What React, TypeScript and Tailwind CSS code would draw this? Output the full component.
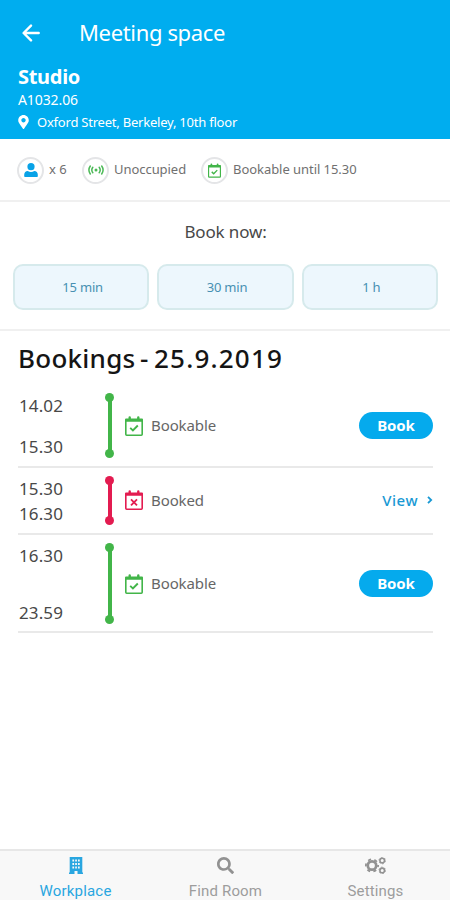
import type { ReactNode } from "react";
import { FaMapMarkerAlt, FaSearch } from "react-icons/fa";

function CalendarIcon({ mark, className }: { mark: "check" | "cross"; className: string }) {
  return (
    <svg viewBox="0 0 18 20" className={className} fill="none" stroke="currentColor">
      <path d="M0 3.5a1 1 0 0 1 1-1h2.5V1.4a1.2 1.2 0 0 1 2.4 0v1.1h6.2V1.4a1.2 1.2 0 0 1 2.4 0v1.1H17a1 1 0 0 1 1 1v2.3H0z" fill="currentColor" stroke="none" />
      <path d="M.8 5v13.3c0 .5.4.9.9.9h14.6c.5 0 .9-.4.9-.9V5" strokeWidth="1.6" />
      {mark === "check" ? (
        <path d="m5.2 11.9 2.7 2.5 4.9-4.9" strokeWidth="1.9" />
      ) : (
        <path d="m6 9.4 6 6m0-6-6 6" strokeWidth="1.8" />
      )}
    </svg>
  );
}

function PersonIcon() {
  return (
    <svg viewBox="0 0 14 14" className="size-[14px] text-[#08a2e7]" fill="currentColor">
      <circle cx="7" cy="3.7" r="3.6" />
      <path d="M1 14a.8.8 0 0 1-.8-.8v-1.5c0-2.2 1.5-3.4 3.5-3.6 1.9 1.3 4.7 1.3 6.6 0 2 .2 3.5 1.4 3.5 3.6v1.5a.8.8 0 0 1-.8.8z" />
    </svg>
  );
}

function SignalIcon() {
  return (
    <svg viewBox="0 0 16 12" className="h-3 w-4 text-[#4bb956]" fill="none" stroke="currentColor" strokeWidth="1.5" strokeLinecap="round">
      <circle cx="8" cy="6" r="1.5" fill="currentColor" stroke="none" />
      <path d="M4.8 3.3a4.5 4.5 0 0 0 0 5.4M11.2 3.3a4.5 4.5 0 0 1 0 5.4M2.3 2a7 7 0 0 0 0 8M13.7 2a7 7 0 0 1 0 8" />
    </svg>
  );
}

function BuildingIcon() {
  return (
    <svg viewBox="0 0 14 17" className="h-[17px] w-[14px]">
      <path d="M.7 0h12.6v15.5h.7V17H8.5v-3h-3v3H0v-1.5h.7z" fill="currentColor" />
      <path d="M3.4 2.5h1.7v2H3.4zm2.8 0h1.7v2H6.2zm2.8 0h1.7v2H9zM3.4 6h1.7v2H3.4zm2.8 0h1.7v2H6.2zM9 6h1.7v2H9zM3.4 9.5h1.7v2H3.4zm2.8 0h1.7v2H6.2zm2.8 0h1.7v2H9z" fill="#f8f8f8" />
    </svg>
  );
}

function GearsIcon() {
  return (
    <svg viewBox="0 0 21 17" className="h-[17px] w-[21px] text-[#929292]" fill="none" stroke="currentColor">
      <circle cx="7" cy="8.5" r="4.2" strokeWidth="2.7" />
      <circle cx="7" cy="8.5" r="6.1" strokeWidth="1.8" strokeDasharray="3 3.388" strokeDashoffset="1.5" />
      <circle cx="17.2" cy="3.6" r="2.3" strokeWidth="1.6" />
      <circle cx="17.2" cy="3.6" r="3.3" strokeWidth=".8" strokeDasharray="1.7 1.756" />
      <circle cx="17.2" cy="13.4" r="2.3" strokeWidth="1.6" />
      <circle cx="17.2" cy="13.4" r="3.3" strokeWidth=".8" strokeDasharray="1.7 1.756" />
    </svg>
  );
}

function Badge({ children }: { children: ReactNode }) {
  return (
    <span className="flex size-[27px] shrink-0 items-center justify-center rounded-full border-2 border-[#e4e5e7] bg-white">
      {children}
    </span>
  );
}

function Timeline({ className }: { className: string }) {
  return (
    <div className={`flex w-[9px] shrink-0 flex-col items-center ${className}`}>
      <span className="size-[9px] shrink-0 rounded-full bg-current" />
      <span className="-my-1 w-1 flex-1 bg-current" />
      <span className="size-[9px] shrink-0 rounded-full bg-current" />
    </div>
  );
}

type RowProps = { from: string; to: string; booked?: boolean; height: string; times: string; line: string; body: string };

function BookingRow({ from, to, booked, height, times, line, body }: RowProps) {
  return (
    <div className={`flex border-b-2 border-[#e9e9e9] ${height}`}>
      <div className={`flex w-[87px] flex-col justify-between pl-px text-[17px] leading-6 tracking-[0.1px] text-[#484848] ${times}`}>
        <span>{from}</span>
        <span>{to}</span>
      </div>
      <Timeline className={`${line} ${booked ? "text-[#e31b50]" : "text-[#42b549]"}`} />
      <div className={`flex flex-1 items-center pl-[11px] ${body}`}>
        <CalendarIcon mark={booked ? "cross" : "check"} className={`h-5 w-[18px] ${booked ? "text-[#e31b50]" : "text-[#42b549]"}`} />
        <span className="ml-[8px] text-[15px] tracking-[-0.1px] text-[#666]">{booked ? "Booked" : "Bookable"}</span>
        {booked ? (
          <button className="ml-auto flex items-center text-[15px] font-medium tracking-[0.5px] text-[#1999d4]">
            View
            <svg viewBox="0 0 6 8" className="ml-[9px] h-2 w-[6px]" fill="none" stroke="currentColor" strokeWidth="1.8">
              <path d="m1 .8 3.2 3.2L1 7.2" />
            </svg>
          </button>
        ) : (
          <button className="ml-auto h-[27px] w-[74px] rounded-full bg-[#05aaed] text-[15px] leading-[27px] font-bold tracking-[-0.1px] text-white">
            Book
          </button>
        )}
      </div>
    </div>
  );
}

export default function App() {
  return (
    <div className="flex h-[900px] w-[450px] flex-col overflow-hidden bg-white font-['Noto_Sans',sans-serif]">
      <header className="h-[139px] shrink-0 bg-[#00adef] pt-[18px] pl-[18px] text-white">
        <div className="flex h-[30px] items-center">
          <svg viewBox="0 0 18 18" className="ml-1 h-[18px] w-[18px]" fill="none" stroke="currentColor" strokeWidth="2.4" strokeLinecap="round" strokeLinejoin="round">
            <path d="M16.7 9H2M9 1.6 1.6 9 9 16.4" />
          </svg>
          <h1 className="-mt-0.5 ml-[39px] text-[22px] leading-[30px] tracking-[-0.35px]">Meeting space</h1>
        </div>
        <div className="mt-4 text-[20px] leading-[26px] font-bold tracking-[-0.3px]">Studio</div>
        <div className="text-[14px] leading-[19px] tracking-[-0.1px]">A1032.06</div>
        <div className="mt-[4px] flex h-[18px] items-center text-[13px] leading-[18px]">
          <FaMapMarkerAlt className="h-[14px] w-[11px]" />
          <span className="ml-2 tracking-[-0.22px]">Oxford Street, Berkeley, 10th floor</span>
        </div>
      </header>

      <section className="flex h-[63px] shrink-0 items-center border-b-2 border-[#f0f0f0] pt-px pl-[17px] text-[13px] text-[#707070]">
        <Badge><PersonIcon /></Badge>
        <span className="ml-[5px] w-[33px]">x 6</span>
        <Badge><SignalIcon /></Badge>
        <span className="ml-[5px] w-[87px] whitespace-nowrap tracking-[-0.05px]">Unoccupied</span>
        <Badge><CalendarIcon mark="check" className="h-[15px] w-[13px] text-[#42b549]" /></Badge>
        <span className="ml-[5px] tracking-[-0.05px]">Bookable until 15.30</span>
      </section>

      <section className="h-[129px] shrink-0 border-b-2 border-[#f0f0f0] pt-[18px] pr-[12px] pl-[13px]">
        <h2 className="text-center text-[17px] leading-6 tracking-[-0.15px] text-[#484848]">Book now:</h2>
        <div className="mt-[20px] grid grid-cols-3 gap-2">
          {["15 min", "30 min", "1 h"].map((label) => (
            <button key={label} className="h-[46px] rounded-[10px] border-2 border-[#d6eaec] bg-[#edf7fd] pt-px pl-[3px] text-[13px] tracking-[-0.2px] text-[#4790b2]">
              {label}
            </button>
          ))}
        </div>
      </section>

      <main className="flex flex-1 flex-col pr-[17px] pl-[18px]">
        <h2 className="mt-[9px] flex h-[46px] text-[26px] leading-[36px] font-medium text-[#151515]">
          <span className="w-[122px] tracking-[0.25px]">Bookings</span>
          <span className="w-[14px]">-</span>
          <span className="tracking-[1.2px]">25.9.2019</span>
        </h2>
        <BookingRow from="14.02" to="15.30" height="h-[82px]" times="pt-[8px] pb-[7px]" line="pt-[7px] pb-2" body="pb-px" />
        <BookingRow from="15.30" to="16.30" booked height="h-[67px]" times="pt-[9px] pb-[7px]" line="pt-[8px] pb-2" body="pb-px" />
        <BookingRow from="16.30" to="23.59" height="h-[98px]" times="pt-[9px] pb-[6px]" line="pt-[8px] pb-[7px]" body="pt-px" />
      </main>

      <nav className="grid h-[51px] shrink-0 grid-cols-3 border-t-2 border-[#e7e7e7] bg-[#f8f8f8] font-[Roboto,sans-serif] text-[15px] text-[#9d9d9d]">
        <div className="flex flex-col items-center pt-[6px] pl-px text-[#29a6e0]">
          <BuildingIcon />
          <span className="mt-[8px] leading-[19px] tracking-[0.2px]">Workplace</span>
        </div>
        <div className="flex flex-col items-center pt-[6px] pl-px">
          <FaSearch className="size-[17px] text-[#929292]" />
          <span className="mt-[8px] leading-[19px] tracking-[0.15px]">Find Room</span>
        </div>
        <div className="flex flex-col items-center pt-[6px] pl-px">
          <GearsIcon />
          <span className="mt-[8px] leading-[19px] tracking-[0.15px]">Settings</span>
        </div>
      </nav>
    </div>
  );
}
